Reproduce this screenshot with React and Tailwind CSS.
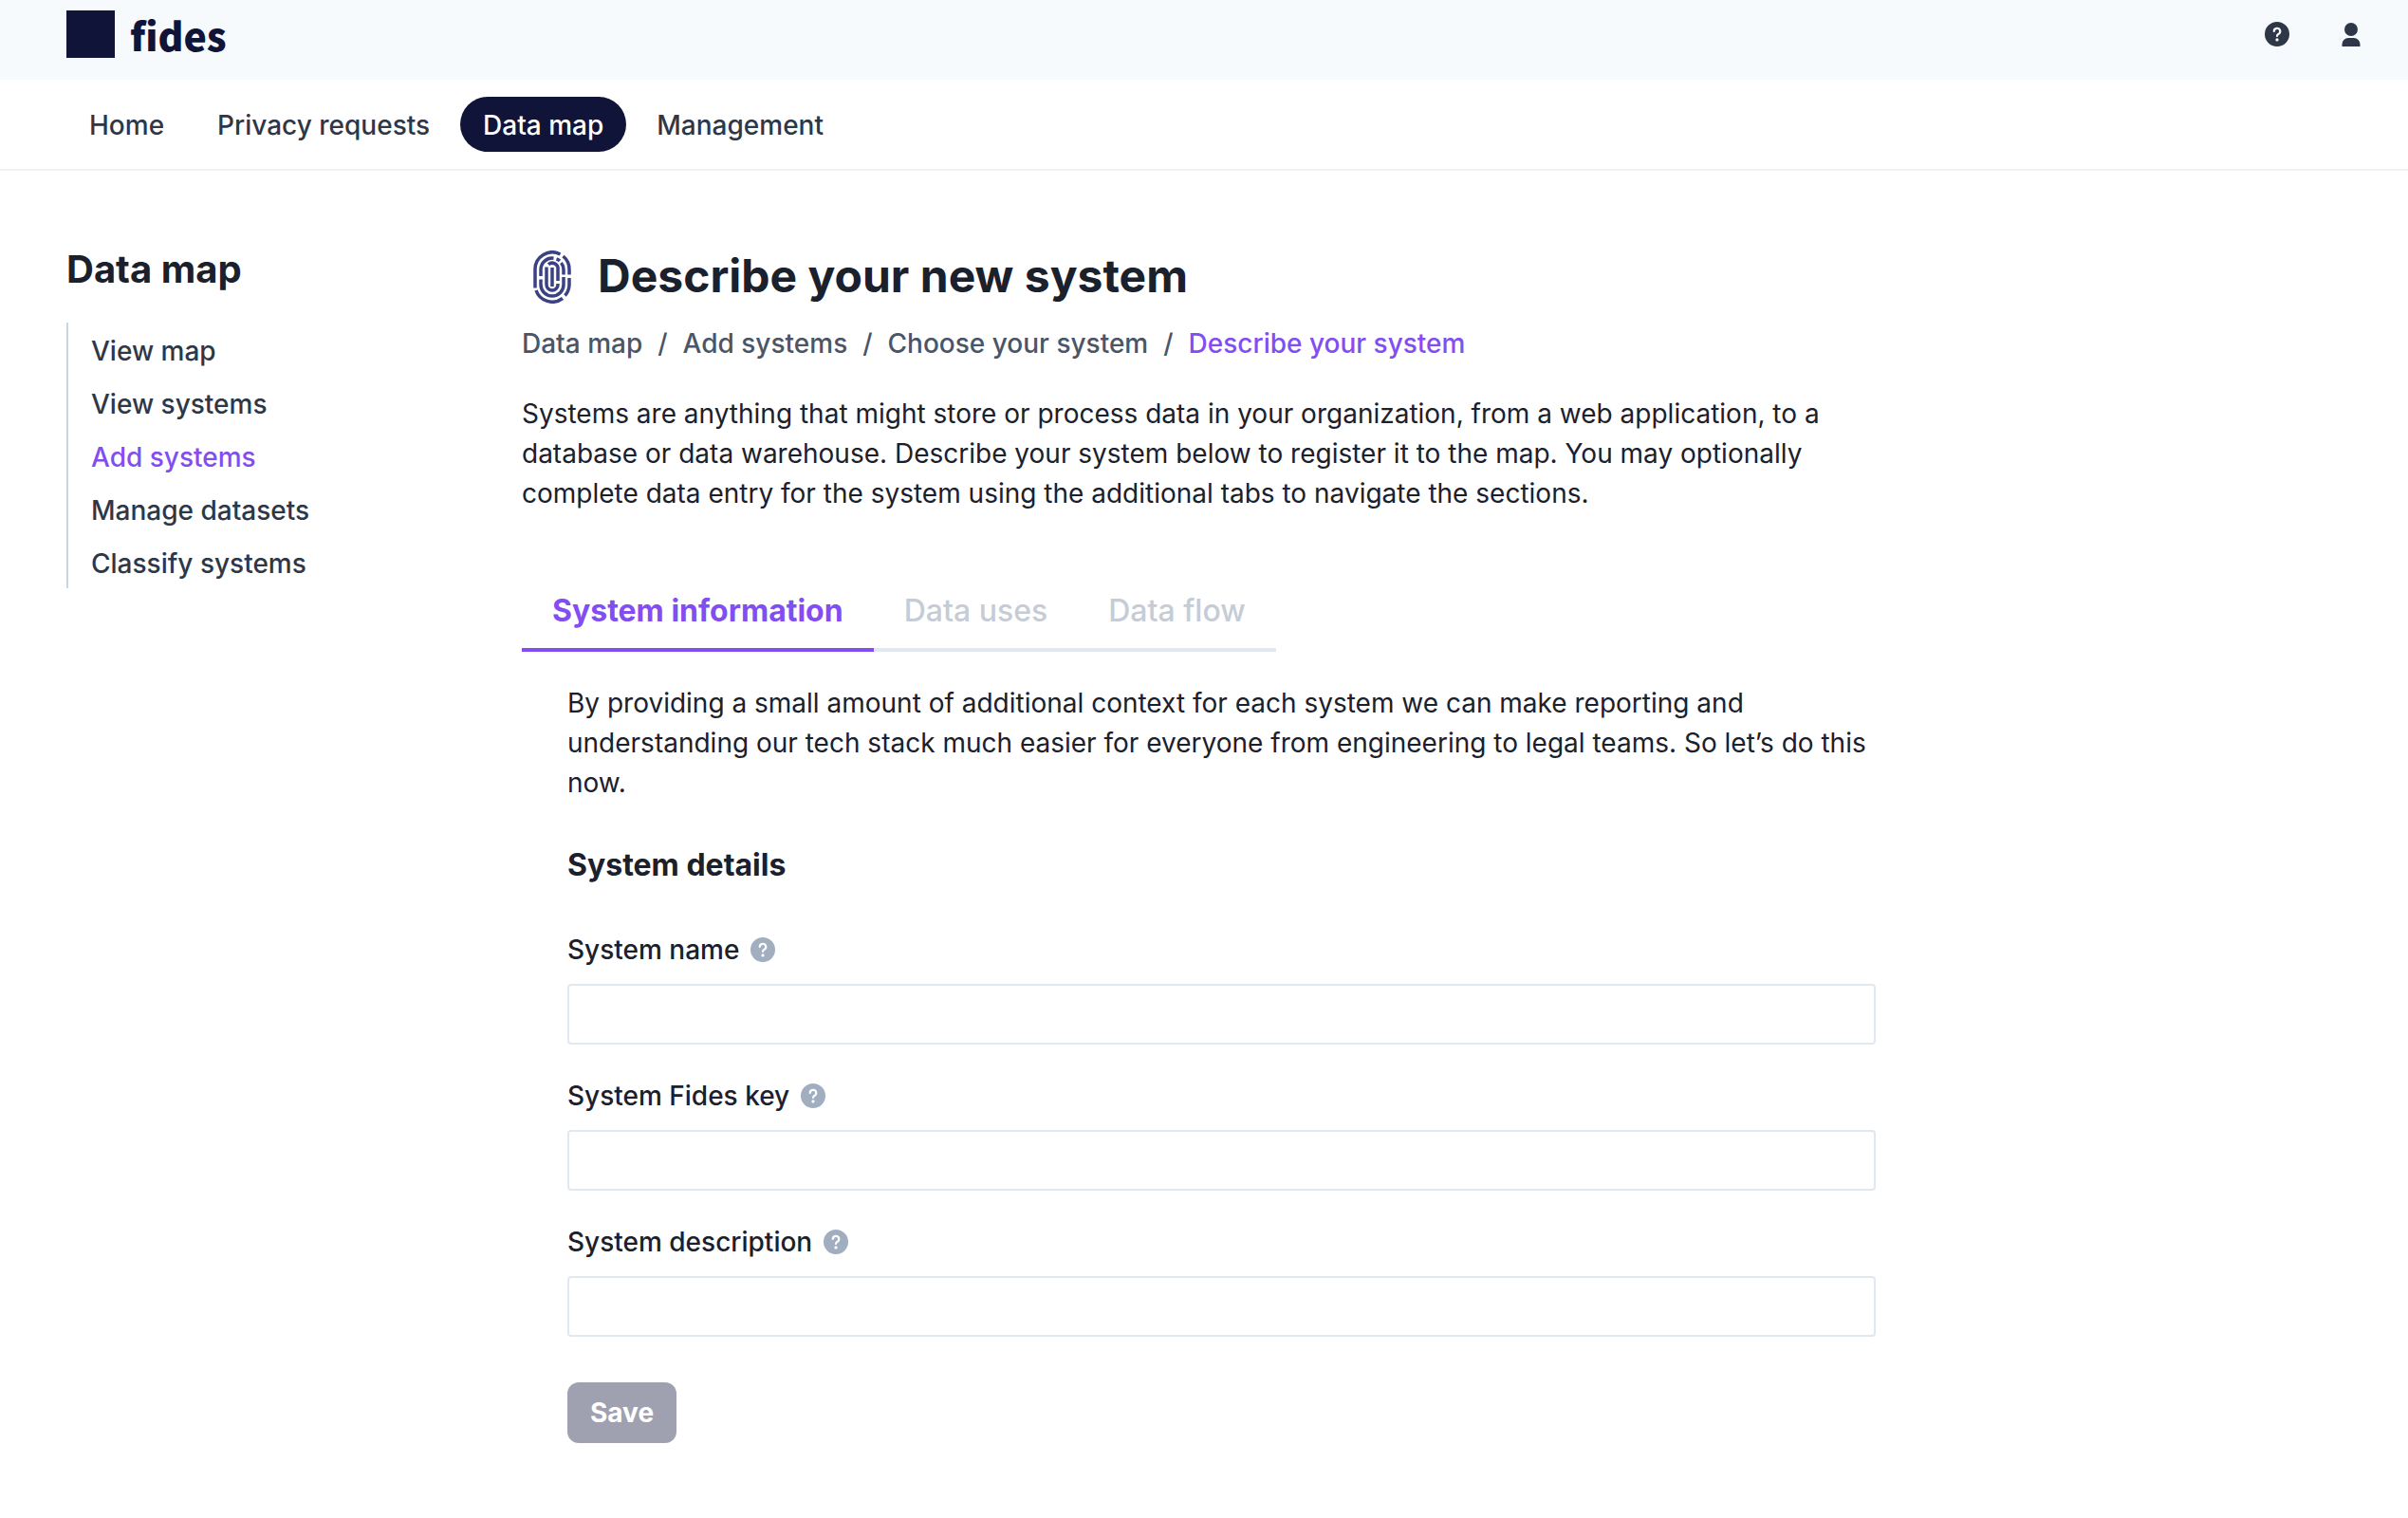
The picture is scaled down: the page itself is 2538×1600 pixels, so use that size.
const navItems = [
  { label: "Home" },
  { label: "Privacy requests" },
  { label: "Data map", active: true },
  { label: "Management" },
];

const sideItems = [
  { label: "View map" },
  { label: "View systems" },
  { label: "Add systems", active: true },
  { label: "Manage datasets" },
  { label: "Classify systems" },
];

const crumbs = ["Data map", "Add systems", "Choose your system"];

const fields = [
  { id: "system-name", label: "System name" },
  { id: "system-key", label: "System Fides key" },
  { id: "system-description", label: "System description" },
];

function QuestionIcon({ className }) {
  return (
    <svg viewBox="0 0 24 24" className={className} fill="currentColor" aria-hidden="true">
      <path d="M12,0A12,12,0,1,0,24,12,12.013,12.013,0,0,0,12,0Zm0,19a1.5,1.5,0,1,1,1.5-1.5A1.5,1.5,0,0,1,12,19Zm1.6-6.08a1,1,0,0,0-.6.917,1,1,0,1,1-2,0,3,3,0,0,1,1.8-2.75A2,2,0,1,0,10,9.255a1,1,0,1,1-2,0,4,4,0,1,1,5.6,3.666Z" />
    </svg>
  );
}

function UserIcon({ className }) {
  return (
    <svg viewBox="0 0 20 26" className={className} fill="currentColor" aria-hidden="true">
      <circle cx="10" cy="8" r="7" />
      <path d="M0.5 26v-2.500a6.500 6.500 0 0 1 6.500-6.500h6a6.500 6.500 0 0 1 6.500 6.500v2.500z" />
    </svg>
  );
}

function FingerprintIcon({ className }) {
  return (
    <svg viewBox="0 0 40 56" className={className} fill="none" stroke="currentColor" strokeWidth="3.5" aria-hidden="true">
      <path d="M2 39.500V20a18 18 0 0 1 26.500-16" />
      <path d="M31.500 6a18 18 0 0 1 6.500 14v5.500" />
      <path d="M38 29v7a18 18 0 0 1-4.500 11.500" />
      <path d="M31 50.500a18 18 0 0 1-28-8.500" />
      <path d="M8 27V20a12 12 0 0 1 13.500-11.800" />
      <path d="M24.500 8.800a12 12 0 0 1 3.500 2.200" />
      <path d="M29.500 13a12 12 0 0 1 2.500 7v5.500" />
      <path d="M32 28v8a12 12 0 0 1-24 0v-5.500" />
      <path d="M16 14.800a6 6 0 0 1 10 5.200v12" />
      <path d="M26 35v1a6 6 0 0 1-12 0V17.500" />
      <path d="M20 18v20" />
    </svg>
  );
}

export default function App() {
  return (
    <div className="min-h-screen bg-white font-['Inter',sans-serif] text-[28px] leading-[42px] text-[#1A202C]">
      <header className="flex h-[84px] items-start justify-between bg-[#F7FAFC] pr-[50px] pl-[70px]">
        <a href="#" className="mt-[11px] flex h-[50px] items-center gap-4 text-[#111439]">
          <span className="h-[50px] w-[51px] bg-[#111439]" />
          <span className="font-['Noto_Sans_CJK_SC',sans-serif] text-[41px] leading-[50px] font-black">fides</span>
        </a>
        <div className="mt-[23px] flex items-center gap-[55px] text-[#2D3748]">
          <button type="button" aria-label="Help" className="block">
            <QuestionIcon className="size-[26px]" />
          </button>
          <button type="button" aria-label="Account" className="block">
            <UserIcon className="h-[26px] w-5" />
          </button>
        </div>
      </header>

      <nav className="flex gap-2 border-b-2 border-[#EDF2F7] px-[70px] py-[18px] font-medium">
        {navItems.map((item) => (
          <a
            key={item.label}
            href="#"
            className={
              item.active
                ? "rounded-full bg-[#111439] px-6 pt-[9px] pb-[7px] text-white"
                : "rounded-full px-6 pt-[9px] pb-[7px] text-[#2D3748]"
            }
          >
            {item.label}
          </a>
        ))}
      </nav>

      <div className="flex px-[70px]">
        <aside className="w-[480px] shrink-0 pt-20">
          <h2 className="text-[40px] leading-[48px] font-bold">Data map</h2>
          <ul className="mt-8 border-l-2 border-[#CBD5E0] pl-6 font-medium">
            {sideItems.map((item) => (
              <li key={item.label} className="flex h-14 items-center pt-1">
                <a href="#" className={item.active ? "text-[#824EF2]" : "text-[#2D3748]"}>
                  {item.label}
                </a>
              </li>
            ))}
          </ul>
        </aside>

        <main className="max-w-[1427px] flex-1 pt-20">
          <div className="flex h-16 items-center gap-7 pl-3">
            <FingerprintIcon className="h-14 w-10 text-[#3B4283]" />
            <h1 className="pb-0.5 text-[48px] leading-[60px] font-bold">Describe your new system</h1>
          </div>

          <ol aria-label="Breadcrumb" className="mt-[17px] flex font-medium text-[#4A5568]">
            {crumbs.map((crumb) => (
              <li key={crumb} className="flex">
                <a href="#">{crumb}</a>
                <span className="px-4">/</span>
              </li>
            ))}
            <li>
              <a href="#" aria-current="page" className="text-[#824EF2]">
                Describe your system
              </a>
            </li>
          </ol>

          <p className="mt-8">
            Systems are anything that might store or process data in your organization, from a web application, to a
            database or data warehouse. Describe your system below to register it to the map. You may optionally
            complete data entry for the system using the additional tabs to navigate the sections.
          </p>

          <div role="tablist" className="mt-[62px] flex w-fit text-[32px] leading-[48px] font-medium">
            <button
              type="button"
              role="tab"
              aria-selected="true"
              className="border-b-4 border-[#824EF2] px-8 pt-[17px] pb-[15px] font-bold text-[#824EF2]"
            >
              System information
            </button>
            <button type="button" role="tab" aria-selected="false" disabled className="border-b-4 border-[#E2E8F0] px-8 pt-[17px] pb-[15px] text-[#C5CCD6]">
              Data uses
            </button>
            <button type="button" role="tab" aria-selected="false" disabled className="border-b-4 border-[#E2E8F0] px-8 pt-[17px] pb-[15px] text-[#C5CCD6]">
              Data flow
            </button>
          </div>

          <form className="mt-[33px] pl-12">
            <p>
              By providing a small amount of additional context for each system we can make reporting and
              understanding our tech stack much easier for everyone from engineering to legal teams. So let’s do this
              now.
            </p>
            <h3 className="mt-[42px] text-[32px] leading-[48px] font-bold">System details</h3>

            <div className="mt-11 flex flex-col gap-[33px]">
              {fields.map((field) => (
                <div key={field.id}>
                  <div className="flex items-center gap-3">
                    <label htmlFor={field.id} className="font-medium">
                      {field.label}
                    </label>
                    <QuestionIcon className="size-[26px] text-[#A0AEC0]" />
                  </div>
                  <input
                    id={field.id}
                    type="text"
                    className="mt-[15px] block h-16 w-full rounded border-2 border-[#E2E8F0] px-6"
                  />
                </div>
              ))}
            </div>

            <button type="button" disabled className="mt-12 block h-16 rounded-xl bg-[#A0A1B0] px-6 font-bold text-white">
              Save
            </button>
          </form>
        </main>
      </div>
    </div>
  );
}
